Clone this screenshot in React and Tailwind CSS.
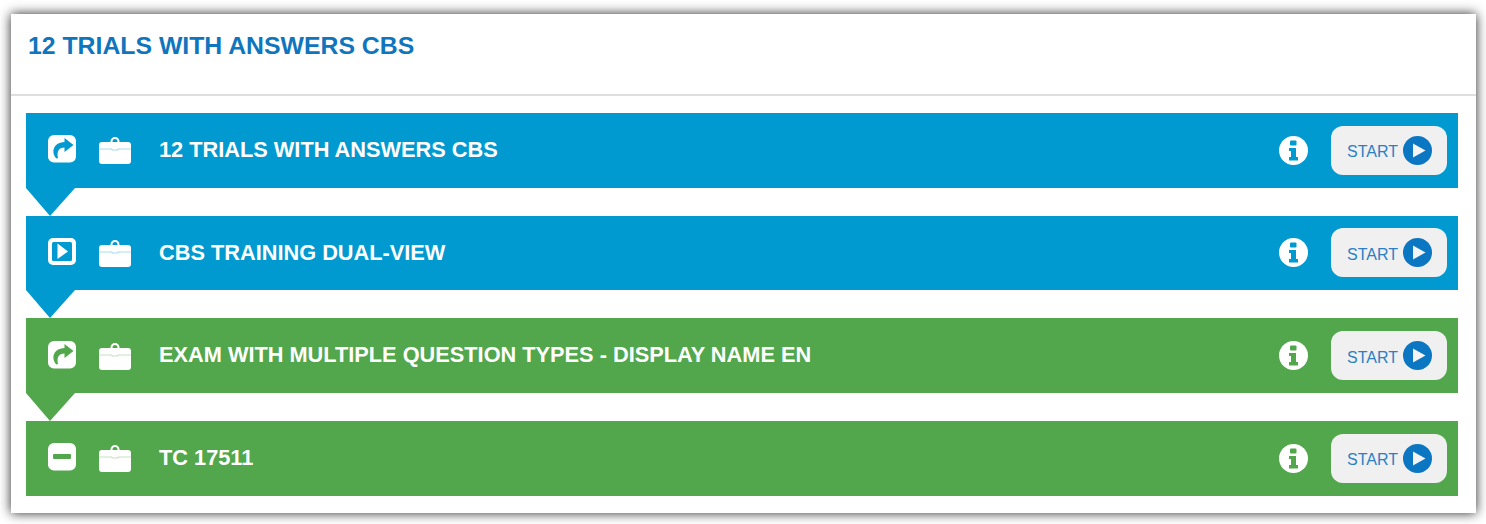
function ShareIcon({ color }) {
  return (
    <svg width="28" height="28" viewBox="0 0 28 28">
      <rect x="0" y="0" width="28" height="27.500" rx="6" fill="#fff" />
      <path
        d="M8.500 23.500 C3 18 4.500 7.500 16.500 7 V3 L25.500 10 L16.500 17 V12.500 C11 12.500 8.500 16 10 23 Z"
        fill={color}
      />
    </svg>
  );
}

function PlayBoxIcon({ color }) {
  return (
    <svg width="28" height="28" viewBox="0 0 28 28">
      <rect x="0" y="0" width="28" height="27" rx="5" fill="#fff" />
      <rect x="4" y="4" width="20" height="19" rx="1.500" fill={color} />
      <path d="M9.500 5.500 L20 13.500 L9.500 21 Z" fill="#fff" />
    </svg>
  );
}

function MinusIcon({ color }) {
  return (
    <svg width="28" height="28" viewBox="0 0 28 28">
      <rect x="0" y="0" width="28" height="27.500" rx="6" fill="#fff" />
      <rect x="5" y="11" width="18" height="5" rx="1" fill={color} />
    </svg>
  );
}

function CaseIcon({ color }) {
  return (
    <svg width="32" height="30" viewBox="0 0 32 30">
      <path d="M12.500 9 V7.500 A3.500 3.500 0 0 1 19.500 7.500 V9" fill="none" stroke="#fff" strokeWidth="2" />
      <rect x="0" y="8" width="32" height="22" rx="3" fill="#fff" />
      <path d="M0 15 H13 V16 H19 V15 H32" fill="none" stroke={color} strokeWidth="1" opacity="0.35" />
    </svg>
  );
}

function InfoIcon({ color }) {
  return (
    <svg width="29" height="29" viewBox="0 0 29 29">
      <circle cx="14.500" cy="14.500" r="14.500" fill="#fff" />
      <rect x="11" y="4.500" width="6.500" height="5" rx="1" fill={color} />
      <path d="M10 12 H17 V21 H19 V24.500 H10 V21 H12 V15 H10 Z" fill={color} />
    </svg>
  );
}

function StartButton() {
  return (
    <button className="flex h-[49px] w-[116px] items-center rounded-[12px] bg-[#f0f0f0] pl-[16px] text-[16px] text-[#2b7fc4]">
      <span className="translate-y-[2px]">START</span>
      <svg className="ml-[5px]" width="29" height="29" viewBox="0 0 29 29">
        <circle cx="14.500" cy="14.500" r="14.500" fill="#0b76c2" />
        <path d="M10 7.500 L22.500 14.500 L10 21.500 Z" fill="#f4f4f4" />
      </svg>
    </button>
  );
}

const rows = [
  { title: '12 TRIALS WITH ANSWERS CBS', Icon: ShareIcon, color: '#009ad0', notch: true },
  { title: 'CBS TRAINING DUAL-VIEW', Icon: PlayBoxIcon, color: '#009ad0', notch: true },
  { title: 'EXAM WITH MULTIPLE QUESTION TYPES - DISPLAY NAME EN', Icon: ShareIcon, color: '#52a74c', notch: true },
  { title: 'TC 17511', Icon: MinusIcon, color: '#52a74c', notch: false },
];

export default function App() {
  return (
    <div className="h-[524px] w-[1486px] overflow-hidden bg-white pl-[11px] pt-[14px] font-['Liberation_Sans',Arial,sans-serif]">
      <div className="h-[499px] w-[1465px] bg-white shadow-[0_0_11px_rgba(0,0,0,0.85)]">
        <div className="h-[82px] border-b-2 border-[#dedede] pl-[17px] pt-[17px]">
          <h1 className="text-[24.800px] font-bold leading-[30px] text-[#0f75bc]">12 TRIALS WITH ANSWERS CBS</h1>
        </div>
        <div className="mx-[15px] mt-[17px] flex w-[1432px] flex-col gap-[28px]">
          {rows.map(({ title, Icon, color, notch }) => (
            <div key={title} className="relative flex h-[74.670px] items-center pl-[22px] pr-[11px]" style={{ backgroundColor: color }}>
              <div className="flex items-center -translate-y-[1px]">
                <Icon color={color} />
                <div className="ml-[23px]"><CaseIcon color={color} /></div>
                <span className="ml-[28px] translate-y-[1px] text-[21.750px] font-bold text-white">{title}</span>
              </div>
              <div className="ml-auto"><InfoIcon color={color} /></div>
              <div className="ml-[23px]"><StartButton /></div>
              {notch && (
                <svg className="absolute left-0 top-full" width="50" height="28" viewBox="0 0 50 28">
                  <path d="M0 0 H49 L24 28 Z" fill={color} />
                </svg>
              )}
            </div>
          ))}
        </div>
      </div>
    </div>
  );
}
